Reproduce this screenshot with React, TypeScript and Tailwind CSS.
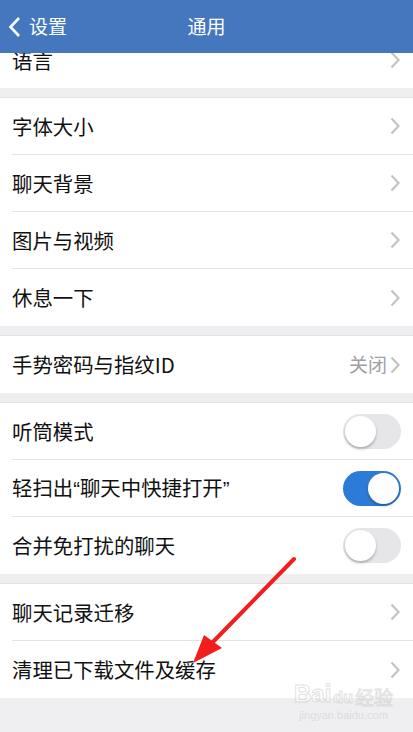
import React from 'react';

const font = { fontFamily: '"Noto Sans CJK SC", "Noto Sans", sans-serif' };
const latin = { fontFamily: '"Liberation Sans", sans-serif' };

const Chevron = () => (
	<svg width="12" height="18" viewBox="0 0 12 18" className="shrink-0">
		<path d="M2.5 1.5 L9.5 9 L2.5 16.5" fill="none" stroke="#c4c4c8" strokeWidth="2.2" />
	</svg>
);

const Toggle = ({ on }: { on?: boolean }) => (
	<div
		className={
			on
				? 'w-[58px] h-[35px] rounded-full bg-[#2d7bd9] p-[2px] flex justify-end'
				: 'w-[58px] h-[35px] rounded-full bg-[#e6e6e9] p-[2px] flex justify-start'
		}
	>
		<div className="w-[31px] h-[31px] rounded-full bg-white shadow-[0_2px_3px_rgba(0,0,0,0.25)]" />
	</div>
);

const Row = ({
	label,
	right,
	last,
	className = '',
}: {
	label: React.ReactNode;
	right?: React.ReactNode;
	last?: boolean;
	className?: string;
}) => (
	<div className={`bg-white pl-3 h-[57px] ${className}`}>
		<div
			className={
				last
					? 'h-full flex items-center justify-between pr-3'
					: 'h-full flex items-center justify-between pr-3 border-b border-[#e2e2e4]'
			}
		>
			<span className="text-[20.4px] text-[#111]">{label}</span>
			{right ?? <Chevron />}
		</div>
	</div>
);

const Gap = () => <div className="h-[10px] bg-[#efeff1] border-b border-[#e2e2e4]" />;

const App = () => {
	return (
		<div className="relative w-[413px] h-[732px] overflow-hidden bg-[#efeff1]" style={font}>
			<div className="h-[53px] bg-[#4577bf] flex items-center relative z-10">
				<div className="flex items-center gap-[8px] pl-[8px] text-white">
					<svg width="13" height="22" viewBox="0 0 13 22">
						<path d="M11 2 L2.5 11 L11 20" fill="none" stroke="#fff" strokeWidth="2.6" />
					</svg>
					<span className="text-[19px]">设置</span>
				</div>
				<span className="absolute left-1/2 -translate-x-1/2 text-white text-[19px]">通用</span>
			</div>

			<Row label="语言" last className="-mt-[22px] pt-[1px]" />
			<Gap />

			<Row label="字体大小" />
			<Row label="聊天背景" />
			<Row label="图片与视频" />
			<Row label="休息一下" last />
			<Gap />

			<Row
				label="手势密码与指纹ID"
				last
				right={
					<div className="flex items-center gap-[2px]">
						<span className="text-[19px] text-[#a0a0a4]">关闭</span>
						<Chevron />
					</div>
				}
			/>
			<Gap />

			<Row label="听筒模式" right={<Toggle />} />
			<Row
				label={
					<>
						轻扫出<span style={latin}>“</span>聊天中快捷打开<span style={latin}>”</span>
					</>
				}
				right={<Toggle on />}
			/>
			<Row label="合并免打扰的聊天" right={<Toggle />} last />
			<Gap />

			<Row label="聊天记录迁移" />
			<Row label="清理已下载文件及缓存" last />

			<div className="absolute left-[294px] top-[682px] flex flex-col items-center leading-none opacity-60">
				<div className="flex items-end gap-[2px]">
					<span className="text-[24px] font-bold text-white [-webkit-text-stroke:1px_#cfcfcf]" style={latin}>
						Bai
					</span>
					<span className="text-[16px] font-bold text-white [-webkit-text-stroke:1px_#cfcfcf]" style={latin}>
						du
					</span>
					<span className="text-[19px] text-white [-webkit-text-stroke:1px_#cfcfcf]">经验</span>
				</div>
				<span className="text-[11px] text-[#d0d0d0] mt-[4px]" style={latin}>
					jingyan.baidu.com
				</span>
			</div>

			<svg className="absolute left-0 top-0 pointer-events-none" width="413" height="732">
				<line x1="294" y1="559" x2="210" y2="645" stroke="#f21d1d" strokeWidth="4" strokeLinecap="round" />
				<polygon points="193,663 204,635 222,648" fill="#f21d1d" />
			</svg>
		</div>
	);
};

export default App;
